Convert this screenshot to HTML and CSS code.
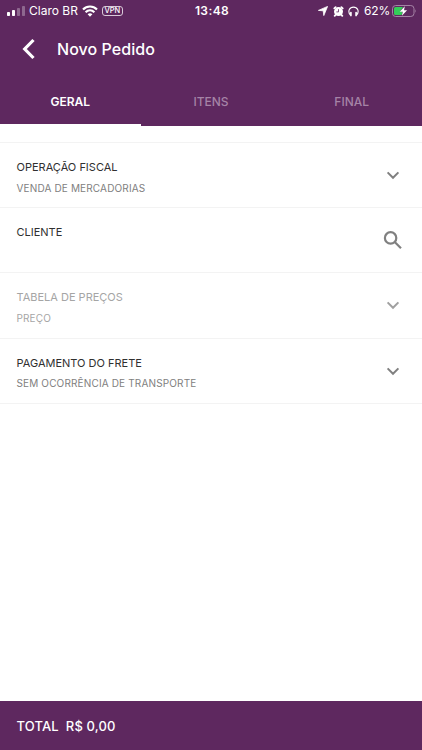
FILE: index.html
```html
<!DOCTYPE html>
<html lang="pt-BR">
<head>
    <meta charset="UTF-8">
    <meta name="viewport" content="width=device-width, initial-scale=1.0">
    <title>Novo Pedido</title>
    <link rel="stylesheet" href="styles.css">
</head>
<body>
    <header class="header">
        <div class="status-bar">
            <div class="status-left">
                <svg class="signal" width="18" height="10" viewBox="0 0 18 10" fill="#fff">
                    <rect x="0" y="6" width="3" height="4" rx="0.8"/>
                    <rect x="5" y="4" width="3" height="6" rx="0.8"/>
                    <rect x="10" y="2" width="3" height="8" rx="0.8" opacity="0.3"/>
                    <rect x="15" y="0" width="3" height="10" rx="0.8" opacity="0.3"/>
                </svg>
                <span class="carrier">Claro BR</span>
                <svg class="wifi" width="16" height="12" viewBox="0 0 16 12" fill="none" stroke="#fff" stroke-width="2.2">
                    <path d="M1 4.5C5 0.5 11 0.5 15 4.5"/>
                    <path d="M3.6 7.3c2.6-2.5 6.2-2.5 8.8 0"/>
                    <path d="M5.6 9.2L8 11.7l2.4-2.5c-1.4-1.2-3.4-1.2-4.8 0z" fill="#fff" stroke="none"/>
                </svg>
                <span class="vpn">VPN</span>
            </div>
            <span class="clock">13:48</span>
            <div class="status-right">
                <svg width="10" height="10" viewBox="0 0 10 10" fill="#fff">
                    <path d="M9.6 0.4L5.8 9.6 5.2 4.8 0.4 4.4z" stroke="#fff" stroke-width="0.8" stroke-linejoin="round"/>
                </svg>
                <svg class="alarm" width="11" height="11" viewBox="0 0 11 11">
                    <path d="M1.3 2.3L2.6 1.1M9.7 2.3L8.4 1.1M2.4 9L1.7 9.9M8.6 9l.7.9" stroke="#fff" stroke-width="1.8" stroke-linecap="round"/>
                    <circle cx="5.5" cy="5.6" r="4.5" fill="#fff"/>
                    <path d="M5.5 3.2v2.7H3.4" fill="none" stroke="#5e285f" stroke-width="0.8"/>
                </svg>
                <svg class="headphones" width="11" height="11" viewBox="0 0 11 11" fill="none" stroke="#fff">
                    <path d="M2.2 9C-0.7 5 1.7 1.1 5.5 1.1S11.7 5 8.8 9" stroke-width="1.1"/>
                    <path d="M2.9 6.5v3M8.1 6.5v3" stroke-width="1.7" stroke-linecap="round"/>
                </svg>
                <span class="percent">62%</span>
                <svg class="battery" width="25" height="12" viewBox="0 0 25 12">
                    <rect x="0.5" y="0.5" width="21.5" height="11" rx="3.2" fill="none" stroke="#a583a6"/>
                    <path d="M3.5 2H11L8 6.6h2.5L9.6 10H3.5Q2 10 2 8.5v-5Q2 2 3.5 2z" fill="#34cd59"/>
                    <path d="M12.8 1.3L7.7 6.7h3.1L9.9 10.7l5.2-5.5H12z" fill="#fff"/>
                    <path d="M23.2 4.2q1.4 1.8 0 3.6z" fill="#a583a6"/>
                </svg>
            </div>
        </div>
        <div class="title-bar">
            <svg class="back" width="14" height="22" viewBox="0 0 14 22" fill="none" stroke="#fff" stroke-width="3.2">
                <path d="M11.5 2L2.7 11l8.8 9"/>
            </svg>
            <h1>Novo Pedido</h1>
        </div>
        <nav class="tabs">
            <a class="tab active">GERAL</a>
            <a class="tab">ITENS</a>
            <a class="tab">FINAL</a>
        </nav>
    </header>

    <main class="fields">
        <div class="field">
            <div class="field-text">
                <div class="label">OPERAÇÃO FISCAL</div>
                <div class="value">VENDA DE MERCADORIAS</div>
            </div>
            <svg class="chevron" width="14" height="10" viewBox="0 0 14 10"><path d="M1.6 2.4L7 7.8l5.4-5.4"/></svg>
        </div>
        <div class="field">
            <div class="field-text">
                <div class="label">CLIENTE</div>
            </div>
            <svg class="search" width="20" height="20" viewBox="0 0 20 20">
                <circle cx="7.6" cy="7.9" r="5.7"/>
                <path d="M11.7 12l6.3 6.3"/>
            </svg>
        </div>
        <div class="field disabled">
            <div class="field-text">
                <div class="label">TABELA DE PREÇOS</div>
                <div class="value">PREÇO</div>
            </div>
            <svg class="chevron" width="14" height="10" viewBox="0 0 14 10"><path d="M1.6 2.4L7 7.8l5.4-5.4"/></svg>
        </div>
        <div class="field">
            <div class="field-text">
                <div class="label">PAGAMENTO DO FRETE</div>
                <div class="value">SEM OCORRÊNCIA DE TRANSPORTE</div>
            </div>
            <svg class="chevron" width="14" height="10" viewBox="0 0 14 10"><path d="M1.6 2.4L7 7.8l5.4-5.4"/></svg>
        </div>
    </main>

    <footer class="total">
        <span>TOTAL</span>
        <span>R$ 0,00</span>
    </footer>
</body>
</html>
```

FILE: styles.css
```css
* {
    box-sizing: border-box;
}
body {
    margin: 0;
    height: 750px;
    display: flex;
    flex-direction: column;
    background: #fff;
    font-family: Inter, "Liberation Sans", sans-serif;
    overflow: hidden;
}
svg {
    display: block;
    flex: none;
}
.header {
    height: 126px;
    background: #5e285f;
    color: #fff;
}
.status-bar {
    display: grid;
    grid-template-columns: 1fr auto 1fr;
    align-items: center;
    height: 22px;
    padding: 0 5px 0 7px;
    font-size: 12px;
    line-height: 22px;
}
.status-left,
.status-right {
    display: flex;
    align-items: center;
}
.status-right {
    justify-content: flex-end;
}
.carrier {
    margin-left: 4px;
}
.wifi {
    margin-left: 4px;
}
.vpn {
    margin-left: 4px;
    width: 21px;
    height: 10px;
    border: 1px solid #d9c9d9;
    border-radius: 3px;
    font-size: 7.5px;
    font-weight: 500;
    line-height: 8px;
    text-align: center;
}
.clock {
    font-weight: 600;
    letter-spacing: 0.4px;
}
.alarm {
    margin-left: 5px;
}
.headphones {
    margin-left: 4px;
}
.percent {
    margin-left: 5px;
    letter-spacing: -0.2px;
}
.battery {
    margin-left: 2px;
}
.title-bar {
    display: flex;
    align-items: center;
    height: 54px;
    padding-left: 22px;
}
.title-bar h1 {
    margin: 0 0 0 21px;
    font-size: 16px;
    font-weight: 500;
    letter-spacing: 0.05px;
}
.tabs {
    display: flex;
    height: 50px;
}
.tab {
    flex: 1;
    border-bottom: 2px solid transparent;
    color: #a583a6;
    font-size: 12px;
    font-weight: 500;
    line-height: 51px;
    letter-spacing: 0;
    text-align: center;
}
.tab.active {
    border-color: #fff;
    color: #fff;
    font-weight: 600;
}
.fields {
    flex: 1;
    margin-top: 16px;
    border-top: 1px solid #f3f3f3;
}
.field {
    display: flex;
    align-items: center;
    justify-content: space-between;
    height: 65.2px;
    padding: 0 22px 0 16.5px;
    border-bottom: 1px solid #f3f3f3;
}
.field-text {
    align-self: flex-start;
    padding-top: 17px;
}
.label {
    color: #303030;
    font-size: 11px;
    line-height: 15px;
}
.value {
    margin-top: 5.5px;
    color: #808080;
    font-size: 10px;
    line-height: 14px;
    letter-spacing: 0.15px;
}
.chevron path {
    fill: none;
    stroke: #808080;
    stroke-width: 2;
}
.search {
    margin-right: -3px;
    fill: none;
    stroke: #808080;
    stroke-width: 2.2;
}
.disabled .label,
.disabled .value {
    color: #a5a5a5;
}
.disabled .chevron path {
    stroke: #a0a0a0;
}
.total {
    display: flex;
    align-items: center;
    gap: 7px;
    height: 49px;
    padding-left: 16.5px;
    background: #5e285f;
    color: #fff;
    font-size: 13px;
    font-weight: 500;
    letter-spacing: 0.15px;
}
```
